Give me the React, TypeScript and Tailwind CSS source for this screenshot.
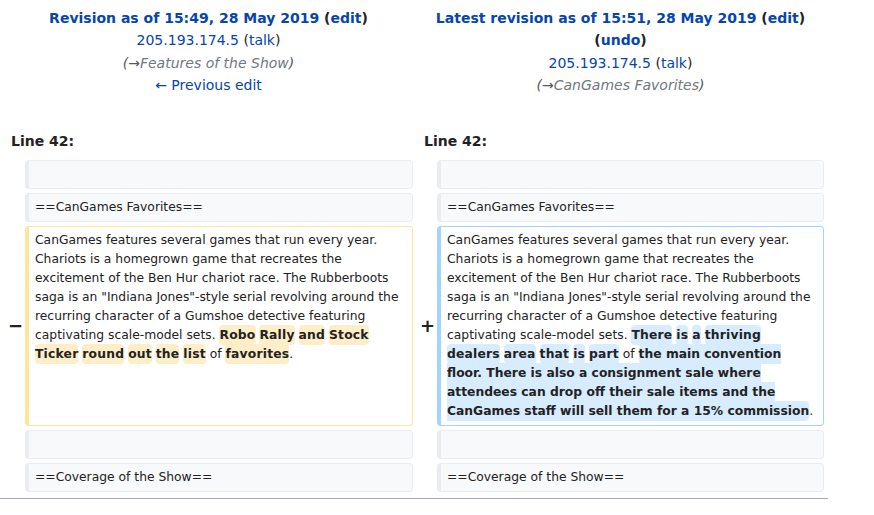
import React from "react";

const LINK = "text-[#0645ad]";

function Del({ children }: { children: React.ReactNode }) {
    return <span className="bg-[#feeec8] rounded-[4px] py-[3px] font-bold tracking-[0.2px]">{children}</span>;
}

function Ins({ children, tight }: { children: React.ReactNode; tight?: boolean }) {
    return (
        <span
            className={
                tight
                    ? "bg-[#d8ecff] rounded-[4px] py-[3px] font-bold"
                    : "bg-[#d8ecff] rounded-[4px] py-[3px] font-bold tracking-[0.2px]"
            }
        >
            {children}
        </span>
    );
}

function Context({ text }: { text?: string }) {
    return (
        <>
            <div />
            <div className="border border-l-4 border-[#eaecf0] bg-[#f8f9fa] rounded-[4px] py-[4px] px-[6px] text-[12.32px] leading-[19px] text-[#222]">
                {text ? text : <br />}
            </div>
        </>
    );
}

function Marker({ sign }: { sign: string }) {
    return (
        <div className="flex items-center justify-end text-[18px] font-bold leading-none text-[#222] -mr-[2px]">
            {sign}
        </div>
    );
}

const common =
    'CanGames features several games that run every year. Chariots is a homegrown game that recreates the excitement of the Ben Hur chariot race. The Rubberboots saga is an "Indiana Jones"-style serial revolving around the recurring character of a Gumshoe detective featuring captivating scale-model sets. ';

export default function App() {
    return (
        <div className="w-[828px] bg-white font-['DejaVu_Sans',sans-serif] text-[14px] text-[#222] border-b border-[#a2a9b1] pb-[6px]">
            <div className="grid grid-cols-[17px_388px_16px_387px] gap-x-[4px] px-[4px]">
                {/* Revision headers */}
                <div className="col-span-2 text-center leading-[22.4px] pt-[7px] px-[7px]">
                    <div className="font-bold">
                        <a className={LINK}>Revision as of 15:49, 28 May 2019</a> (<a className={LINK}>edit</a>)
                    </div>
                    <div>
                        <a className={LINK}>205.193.174.5</a> (<a className={LINK}>talk</a>)
                    </div>
                    <div className="italic text-[#54595d]">
                        (→<span className="text-[#72777d]">Features of the Show</span>)
                    </div>
                    <div>
                        <a className={LINK}>← Previous edit</a>
                    </div>
                </div>
                <div className="col-span-2 text-center leading-[22.4px] pt-[7px] px-[7px]">
                    <div className="font-bold">
                        <a className={LINK}>Latest revision as of 15:51, 28 May 2019</a> (<a className={LINK}>edit</a>) (<a className={LINK}>undo</a>)
                    </div>
                    <div>
                        <a className={LINK}>205.193.174.5</a> (<a className={LINK}>talk</a>)
                    </div>
                    <div className="italic text-[#54595d]">
                        (→<span className="text-[#72777d]">CanGames Favorites</span>)
                    </div>
                </div>

                {/* Line numbers */}
                <div className="col-span-2 font-bold leading-[22px] px-[7px] mt-[33px] mb-[8px]">Line 42:</div>
                <div className="col-span-2 font-bold leading-[22px] px-[7px] mt-[33px] mb-[8px]">Line 42:</div>
            </div>

            <div className="grid grid-cols-[17px_388px_16px_387px] gap-x-[4px] gap-y-[4px] px-[4px]">
                <Context />
                <Context />

                <Context text="==CanGames Favorites==" />
                <Context text="==CanGames Favorites==" />

                <Marker sign="−" />
                <div className="border border-l-4 border-[#ffe49c] rounded-[4px] py-[4px] px-[6px] text-[12.32px] leading-[19px] text-[#222]">
                    {common}
                    <Del>Robo</Del> <Del>Rally</Del> <Del>and</Del> <Del>Stock</Del> <Del>Ticker</Del>{" "}
                    <Del>round</Del> <Del>out</Del> <Del>the</Del> <Del>list</Del> of <Del>favorites</Del>.
                </div>
                <Marker sign="+" />
                <div className="border border-l-4 border-[#a3d3ff] rounded-[4px] py-[4px] px-[6px] text-[12.32px] leading-[19px] text-[#222]">
                    {common}
                    <Ins>There</Ins> <Ins>is</Ins> <Ins>a</Ins> <Ins>thriving</Ins> <Ins>dealers</Ins>{" "}
                    <Ins>area</Ins> <Ins>that</Ins> <Ins>is</Ins> <Ins>part</Ins> of{" "}
                    <Ins tight>
                        the main convention floor. There is also a consignment sale where attendees can drop off their
                        sale items and the CanGames staff will sell them for a 15% commission
                    </Ins>
                    .
                </div>

                <Context />
                <Context />

                <Context text="==Coverage of the Show==" />
                <Context text="==Coverage of the Show==" />
            </div>
        </div>
    );
}
